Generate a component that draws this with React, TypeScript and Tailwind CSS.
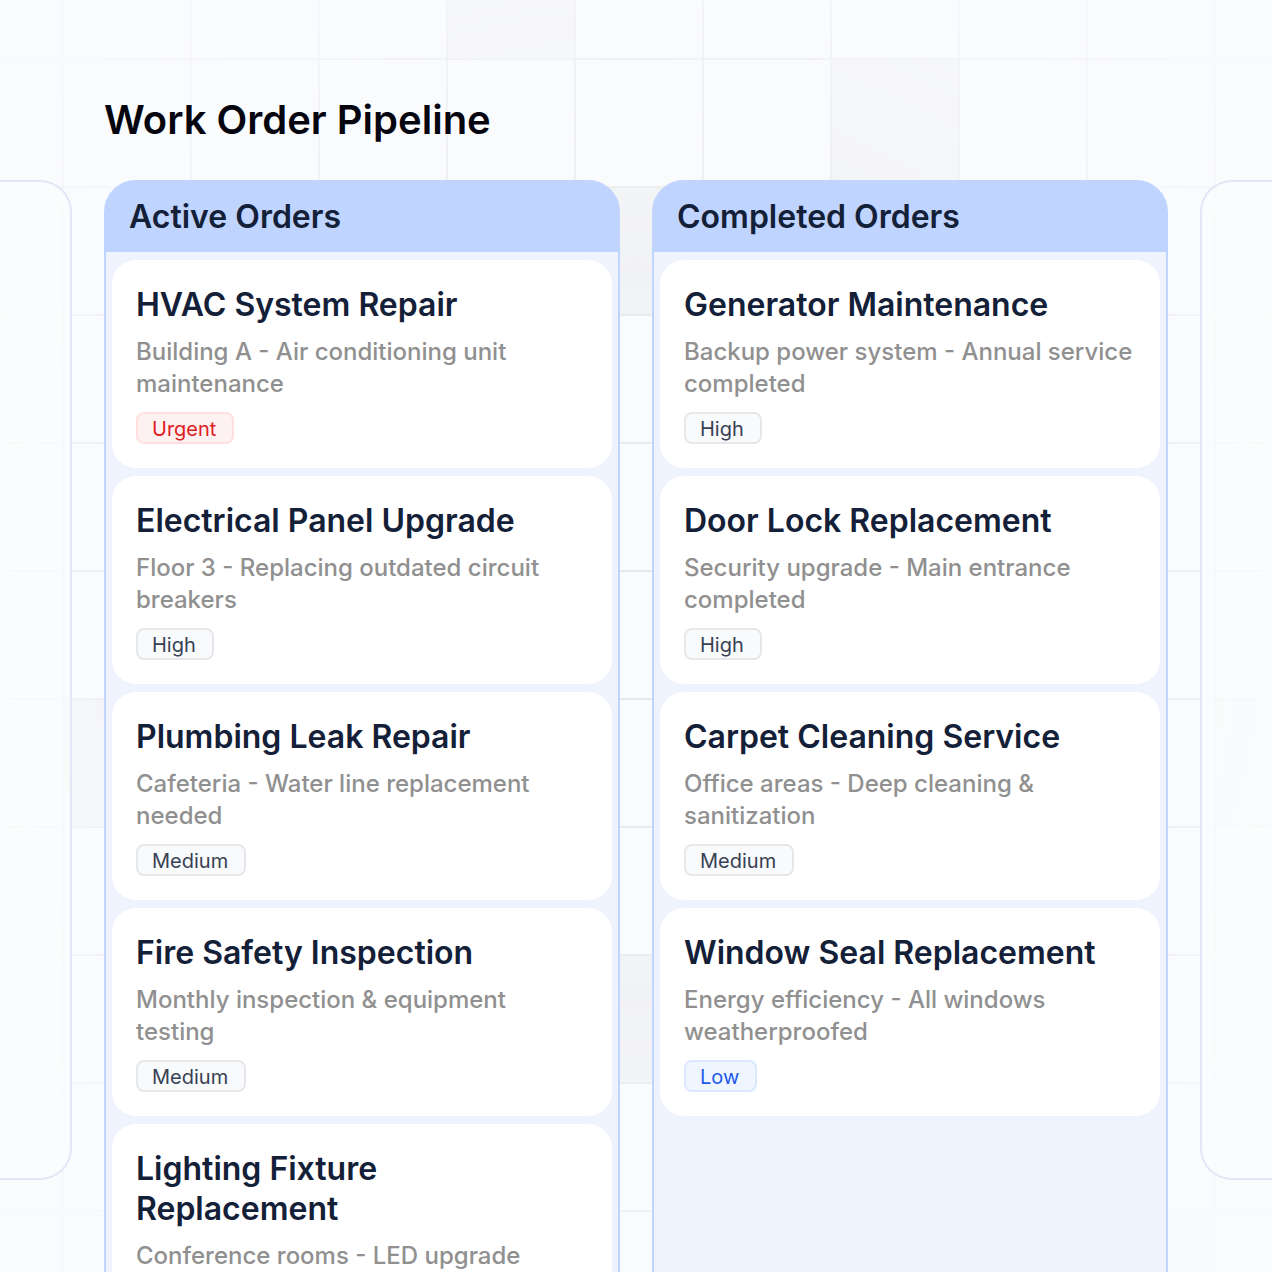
import React from 'react';

type Priority = 'Urgent' | 'High' | 'Medium' | 'Low';

interface WorkOrder {
  title: string;
  description: string;
  priority?: Priority;
}

interface ColumnProps {
  title: string;
  orders: WorkOrder[];
}

const ACTIVE_ORDERS: WorkOrder[] = [
  { title: 'HVAC System Repair', description: 'Building A - Air conditioning unit maintenance', priority: 'Urgent' },
  { title: 'Electrical Panel Upgrade', description: 'Floor 3 - Replacing outdated circuit breakers', priority: 'High' },
  { title: 'Plumbing Leak Repair', description: 'Cafeteria - Water line replacement needed', priority: 'Medium' },
  { title: 'Fire Safety Inspection', description: 'Monthly inspection & equipment testing', priority: 'Medium' },
  { title: 'Lighting Fixture Replacement', description: 'Conference rooms - LED upgrade' },
];

const COMPLETED_ORDERS: WorkOrder[] = [
  { title: 'Generator Maintenance', description: 'Backup power system - Annual service completed', priority: 'High' },
  { title: 'Door Lock Replacement', description: 'Security upgrade - Main entrance completed', priority: 'High' },
  { title: 'Carpet Cleaning Service', description: 'Office areas - Deep cleaning & sanitization', priority: 'Medium' },
  { title: 'Window Seal Replacement', description: 'Energy efficiency - All windows weatherproofed', priority: 'Low' },
];

const BADGE_STYLES: Record<Priority, string> = {
  Urgent: 'border-[#ffdfe0] bg-[#fef1f1] text-[#dc2020]',
  High: 'border-[#e5e7eb] bg-[#f9fafc] text-[#364153]',
  Medium: 'border-[#e5e7eb] bg-[#f9fafc] text-[#364153]',
  Low: 'border-[#dbe8fe] bg-[#eff6ff] text-[#2259e8]',
};

// Shaded squares of the backdrop, as [column, row] of the 128px grid
const SHADED_CELLS = [[3, -1], [6, 0], [4, 1], [0, 5], [9, 5], [4, 7], [8, 9]];

const GridBackdrop: React.FC = () => (
  <svg className="absolute inset-0 h-full w-full" aria-hidden="true">
    <defs>
      <pattern id="grid" x="62" y="58" width="128" height="128" patternUnits="userSpaceOnUse">
        <path d="M0 1H128M1 0V128" fill="none" stroke="#e6e7ea" strokeWidth="2" />
      </pattern>
      <radialGradient id="fade" cx="50%" cy="50%" r="62%">
        <stop offset="0" stopColor="#fff" />
        <stop offset="0.45" stopColor="#fff" stopOpacity="0.8" />
        <stop offset="1" stopColor="#fff" stopOpacity="0.1" />
      </radialGradient>
      <mask id="fade-mask">
        <rect width="100%" height="100%" fill="url(#fade)" />
      </mask>
    </defs>
    <g mask="url(#fade-mask)">
      {SHADED_CELLS.map(([col, row]) => (
        <rect key={`${col}-${row}`} x={62 + col * 128} y={58 + row * 128} width="128" height="128" fill="#eff0f2" />
      ))}
      <rect width="100%" height="100%" fill="url(#grid)" />
    </g>
  </svg>
);

const OrderCard: React.FC<{ order: WorkOrder }> = ({ order }) => (
  <li className="flex flex-col items-start rounded-3xl bg-white pt-[25px] pr-[26px] pb-6 pl-6">
    <h3 className="mb-[11px] text-[32px] leading-10 font-semibold text-[#132038]">{order.title}</h3>
    <p className="text-2xl leading-8 font-medium text-[#909090]">{order.description}</p>
    {order.priority && (
      <span className={`mt-3 flex h-8 items-center rounded-lg border-2 pt-0.5 pr-4 pl-3.5 text-xl ${BADGE_STYLES[order.priority]}`}>
        {order.priority}
      </span>
    )}
  </li>
);

const Column: React.FC<ColumnProps> = ({ title, orders }) => (
  <section className="flex flex-col rounded-[32px] border-2 border-[#bfd4ff] bg-[#bfd4ff]">
    <h2 className="px-[23px] py-[15px] text-[32px] leading-10 font-semibold text-[#132038]">{title}</h2>
    <ul className="flex grow flex-col gap-2 rounded-b-[30px] bg-[#eef3fe] px-1.5 pt-2 pb-16">
      {orders.map(order => (
        <OrderCard key={order.title} order={order} />
      ))}
    </ul>
  </section>
);

export default function App() {
  return (
    <main className="relative h-screen overflow-hidden bg-[#fafbfd] font-['Inter',sans-serif]">
      <GridBackdrop />
      <div className="relative pt-24">
        <h1 className="px-26 text-[40px] leading-12 font-semibold text-[#04050f]">Work Order Pipeline</h1>
        <div className="mt-9 grid grid-cols-[72px_minmax(0,1fr)_minmax(0,1fr)_72px] gap-8">
          {/* Neighbouring columns peeking in from the sides */}
          <div className="h-[1000px] rounded-r-[32px] border-2 border-l-0 border-[#e3e6f6] bg-[#fcfdfd]/60" />
          <Column title="Active Orders" orders={ACTIVE_ORDERS} />
          <Column title="Completed Orders" orders={COMPLETED_ORDERS} />
          <div className="h-[1000px] rounded-l-[32px] border-2 border-r-0 border-[#e3e6f6] bg-[#fcfdfd]/60" />
        </div>
      </div>
    </main>
  );
}
